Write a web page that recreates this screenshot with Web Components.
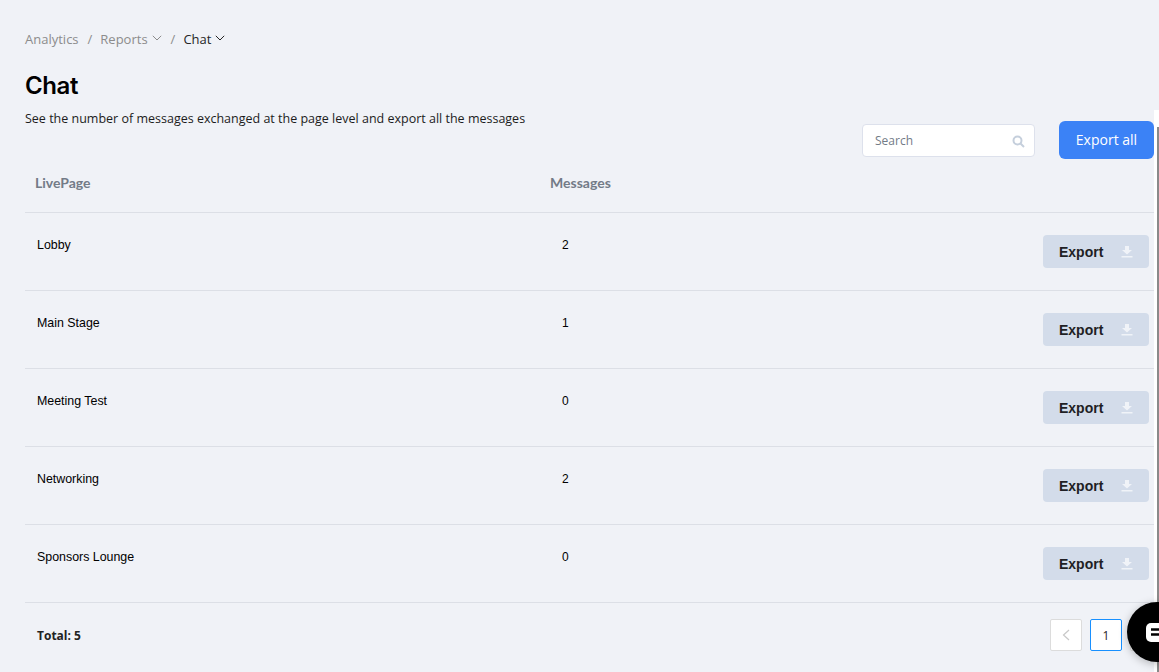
<!DOCTYPE html>
<html><head><meta charset="utf-8"><style>
html,body{margin:0;height:100%;overflow:hidden;background:#f0f2f7}
</style></head><body>
<chat-page></chat-page>
<script>
const chev='<svg width="10" height="6" viewBox="0 0 10 6" fill="none" stroke="currentColor" stroke-width="1"><path d="M.8.8 5 5 9.2.8"/></svg>';
class BreadCrumbs extends HTMLElement{constructor(){super();this.attachShadow({mode:'open'}).innerHTML=`<style>
:host{display:flex;align-items:center;height:20px;font:13px/20px "Open Sans",sans-serif;color:#8c8c8c}
.s{margin:0 8px 0 9px}.c{display:inline-flex;margin-left:4px;margin-top:-2px}.cur{color:#262626}
</style><span>Analytics</span><span class="s">/</span><span>Reports</span><span class="c">${chev}</span><span class="s">/</span><span class="cur">Chat</span><span class="c cur">${chev}</span>`}}
class SearchBox extends HTMLElement{constructor(){super();this.attachShadow({mode:'open'}).innerHTML=`<style>
:host{display:flex;align-items:center;justify-content:space-between;box-sizing:border-box;width:173px;height:33px;background:#fff;border:1px solid #dde1ec;border-radius:4px;padding:0 9px 0 12px;font:12px "Open Sans",sans-serif;color:#737b87}
svg{display:block;margin-top:2px}
</style><span>Search</span><svg width="13" height="13" viewBox="0 0 13 13" fill="none" stroke="#c5cfdc" stroke-width="2"><circle cx="5.5" cy="5.5" r="4"/><path d="M8.5 8.5 12 12"/></svg>`}}
class ExportButton extends HTMLElement{constructor(){super();this.attachShadow({mode:'open'}).innerHTML=`<style>
:host{display:flex;align-items:center;justify-content:space-between;box-sizing:border-box;width:106px;height:33px;background:#d3dcea;border-radius:4px;padding:0 16px;font:bold 14px "Liberation Sans",sans-serif;color:#1f1f24}
svg{display:block}
</style><span>Export</span><svg width="12" height="13" viewBox="0 0 12 13" fill="#f0f3f8"><path d="M4 1h4v4h3L6 9.5 1 5h3zM.5 11h11v1.6H.5z"/></svg>`}}
class TableRow extends HTMLElement{constructor(){super();this.attachShadow({mode:'open'}).innerHTML=`<style>
:host{display:grid;grid-template-columns:525px 1fr auto;box-sizing:border-box;height:78px;border-bottom:1px solid #dcdfe6;padding:22px 5px 0 12px;font:12px/20px "Liberation Sans",sans-serif;color:#000}
export-button{margin-right:0}
div{font-size:12px}
</style><div style="font-size:12.4px"><slot name="n"></slot></div><div><slot name="m"></slot></div><export-button></export-button>`}}
class PageButton extends HTMLElement{constructor(){super();this.attachShadow({mode:'open'}).innerHTML=`<style>
:host{display:flex;align-items:center;justify-content:center;box-sizing:border-box;width:32px;height:32px;background:#fff;border:1px solid #dcdcdc;border-radius:2px;font:12px "Open Sans",sans-serif;color:#262626;flex:none}
:host([active]){border-color:#1890ff}
</style><slot></slot>`}}
class ChatWidget extends HTMLElement{constructor(){super();this.attachShadow({mode:'open'}).innerHTML=`<style>
:host{position:absolute;left:1127px;top:602px;width:60px;height:60px;border-radius:50%;background:#000;box-shadow:0 2px 8px rgba(0,0,0,.25);display:block}
svg{position:absolute;left:19px;top:21px}
</style><svg width="30" height="20" viewBox="0 0 30 20"><rect width="30" height="19" rx="5" fill="#fff"/><path d="M5 6.5h20M5 11.5h20" stroke="#000" stroke-width="2.4"/></svg>`}}
class ChatPage extends HTMLElement{constructor(){super();
const rows=[['Lobby',2],['Main Stage',1],['Meeting Test',0],['Networking',2],['Sponsors Lounge',0]];
this.attachShadow({mode:'open'}).innerHTML=`<style>
:host{display:block;position:relative;box-sizing:border-box;width:1159px;height:672px;padding:29px 5px 0 25px;overflow:hidden;color:#000}
h1{margin:22px 0 0;font:600 24px/30px Inter,sans-serif;letter-spacing:-.4px;color:#000}
p{margin:9px 0 0;font:12.5px/18px "Open Sans",sans-serif;color:#1c1c1c}
.tools{display:flex;justify-content:flex-end;align-items:flex-start;gap:24px;height:38px;margin-top:-7px}
search-box{margin-top:3px}
.all{box-sizing:border-box;width:95px;height:38px;background:#3b82f6;color:#fff;border-radius:6px;font:14px/38px "Open Sans",sans-serif;text-align:center}
.head{display:grid;grid-template-columns:515px 1fr;box-sizing:border-box;height:54px;border-bottom:1px solid #dcdfe6;padding:14px 10px 0;font:bold 14px/20px Lato,sans-serif;color:#737b87}
.foot{display:flex;justify-content:space-between;align-items:center;padding:16px 0 0 12px;font:bold 12px "Open Sans",sans-serif;color:#222}
.pg{display:flex;gap:8px;margin-right:-8px}
.side{position:absolute;left:1154px;top:110px;width:5px;height:562px;background:#fff}
.side i{position:absolute;left:3px;top:17px;bottom:0;width:2px;background:#8a8a8a}
</style>
<bread-crumbs></bread-crumbs>
<h1>Chat</h1>
<p>See the number of messages exchanged at the page level and export all the messages</p>
<div class="tools"><search-box></search-box><div class="all">Export all</div></div>
<div class="head"><span>LivePage</span><span>Messages</span></div>
${rows.map(r=>`<table-row><span slot="n">${r[0]}</span><span slot="m">${r[1]}</span></table-row>`).join('')}
<div class="foot"><span>Total: 5</span><div class="pg"><page-button style="color:#c4c4c4"><svg width="8" height="12" viewBox="0 0 8 12" fill="none" stroke="#c8c8c8" stroke-width="1.2"><path d="M7 1 1.5 6 7 11"/></svg></page-button><page-button active>1</page-button><page-button></page-button></div></div>
<div class="side"><i></i></div>
<chat-widget></chat-widget>`}}
customElements.define('bread-crumbs',BreadCrumbs);
customElements.define('search-box',SearchBox);
customElements.define('export-button',ExportButton);
customElements.define('table-row',TableRow);
customElements.define('page-button',PageButton);
customElements.define('chat-widget',ChatWidget);
customElements.define('chat-page',ChatPage);
</script></body></html>
